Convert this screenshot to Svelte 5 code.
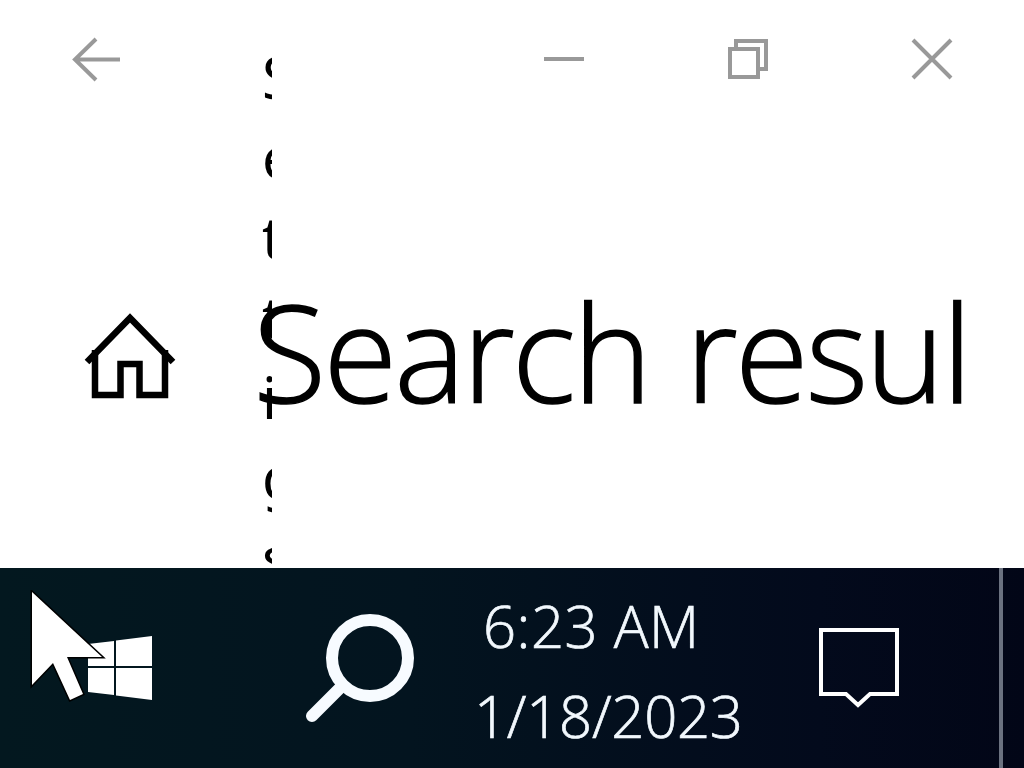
<script>
  const settings = ["S", "e", "t", "t", "in", "g", "s"];
</script>

<div class="screen">
  <main class="window">
    <div class="strip">
      {#each settings as part}
        <span>{part}</span>
      {/each}
    </div>

    <header class="chrome">
      <svg class="back" viewBox="70 36 52 46" width="52" height="46">
        <path d="M120 59.500H75M96 39 75 59.500 96 80" />
      </svg>
      <svg class="min" viewBox="544 50 40 18" width="40" height="18">
        <path d="M544 59H584" />
      </svg>
      <svg class="restore" viewBox="726 37 44 44" width="44" height="44">
        <path d="M736 47V41H766V69H760" />
        <rect x="730" y="49" width="28" height="28" />
      </svg>
      <svg class="close" viewBox="910 38 44 44" width="44" height="44">
        <path d="M913 40 951 78M951 40 913 78" />
      </svg>
    </header>

    <div class="home">
      <svg viewBox="82 310 96 92" width="96" height="92">
        <path d="M95 350V395H120.500V364H139.500V395H165V350" />
        <path d="M87 362 130 318 173 362" />
      </svg>
    </div>

    <h1>Search resul</h1>
  </main>

  <footer class="taskbar">
    <svg class="start" viewBox="30 590 124 112" width="124" height="112">
      <polygon points="88,644 114,641 114,666 88,666" />
      <polygon points="116,640.500 152,636 152,666 116,666" />
      <polygon points="88,668 114,668 114,695 88,692" />
      <polygon points="116,668 152,668 152,700 116,695.500" />
      <polygon class="cursor" points="32,592 32,685 53,663 70,700 83,694 67,657 102,657" />
    </svg>

    <svg class="search" viewBox="304 612 112 110" width="112" height="110">
      <circle cx="370" cy="658" r="38" />
      <path d="M342 686 312 716" />
    </svg>

    <div class="clock">
      <span class="time">6:23 AM</span>
      <span class="date">1/18/2023</span>
    </div>

    <svg class="bubble" viewBox="818 627 82 82" width="82" height="82">
      <path d="M821 630H897V694H870L858 705 846 694H821Z" />
    </svg>

    <div class="edge"></div>
  </footer>
</div>

<style>
  :global(body) {
    margin: 0;
    background: #fff;
  }

  .screen {
    width: 1024px;
    height: 768px;
    overflow: hidden;
    display: flex;
    flex-direction: column;
    font-family: "Open Sans", "Noto Sans", sans-serif;
  }

  .window {
    height: 568px;
    overflow: hidden;
    display: grid;
    grid-template-columns: 253px 1fr;
    grid-template-rows: 118px 1fr;
    color: #000;
  }

  .chrome {
    grid-column: 1 / -1;
    grid-row: 1;
    display: flex;
    align-items: flex-start;
    padding: 36px 0 0 70px;
  }
  .chrome svg {
    fill: none;
    stroke: #999;
    stroke-width: 4;
  }
  .min {
    margin: 14px 0 0 422px;
  }
  .restore {
    margin: 1px 0 0 142px;
  }
  .close {
    margin: 2px 0 0 140px;
    stroke-width: 3.500;
  }

  .strip {
    grid-column: 2;
    grid-row: 1 / -1;
    width: 10px;
    height: 568px;
    margin-left: 9px;
    padding-top: 37px;
    box-sizing: border-box;
    overflow: hidden;
    font-family: "Noto Sans", "Open Sans", sans-serif;
    font-size: 58px;
    font-weight: 400;
    line-height: 80px;
    white-space: nowrap;
  }
  .strip span {
    display: block;
  }

  .home {
    grid-column: 1;
    grid-row: 2;
    padding: 192px 0 0 82px;
  }
  .home svg {
    display: block;
    fill: none;
    stroke: #000;
    stroke-width: 6.500;
  }

  h1 {
    grid-column: 2;
    grid-row: 2;
    margin: 138px 0 0;
    font-size: 134px;
    font-weight: 300;
    letter-spacing: -2.700px;
    word-spacing: 4px;
    line-height: 190px;
    white-space: nowrap;
    -webkit-text-stroke: 1.500px #000;
  }

  .taskbar {
    height: 200px;
    display: flex;
    align-items: flex-start;
    background: linear-gradient(90deg, #03181f 0%, #03141f 40%, #030a1c 80%, #020617 100%);
    color: #f2f8fd;
  }

  .start {
    flex: none;
    margin: 22px 0 0 30px;
    fill: #fff;
  }
  .cursor {
    stroke: #000;
    stroke-width: 3;
    paint-order: stroke;
  }

  .search {
    flex: none;
    margin: 44px 0 0 150px;
    fill: none;
    stroke: #f7fbff;
    stroke-width: 12;
    stroke-linecap: round;
  }

  .clock {
    flex: none;
    width: 290px;
    margin-left: 58px;
    display: flex;
    flex-direction: column;
    font-size: 58px;
    font-weight: 300;
    letter-spacing: -0.300px;
    line-height: 90px;
    white-space: nowrap;
    -webkit-text-stroke: 0.700px #f2f8fd;
  }
  .time {
    margin: 13px 0 0 9px;
    letter-spacing: 0.500px;
  }

  .bubble {
    flex: none;
    margin: 59px 0 0 54px;
    fill: none;
    stroke: #fff;
    stroke-width: 4;
  }

  .edge {
    flex: none;
    width: 4px;
    height: 200px;
    margin-left: 99px;
    background: #6b7280;
  }
</style>
